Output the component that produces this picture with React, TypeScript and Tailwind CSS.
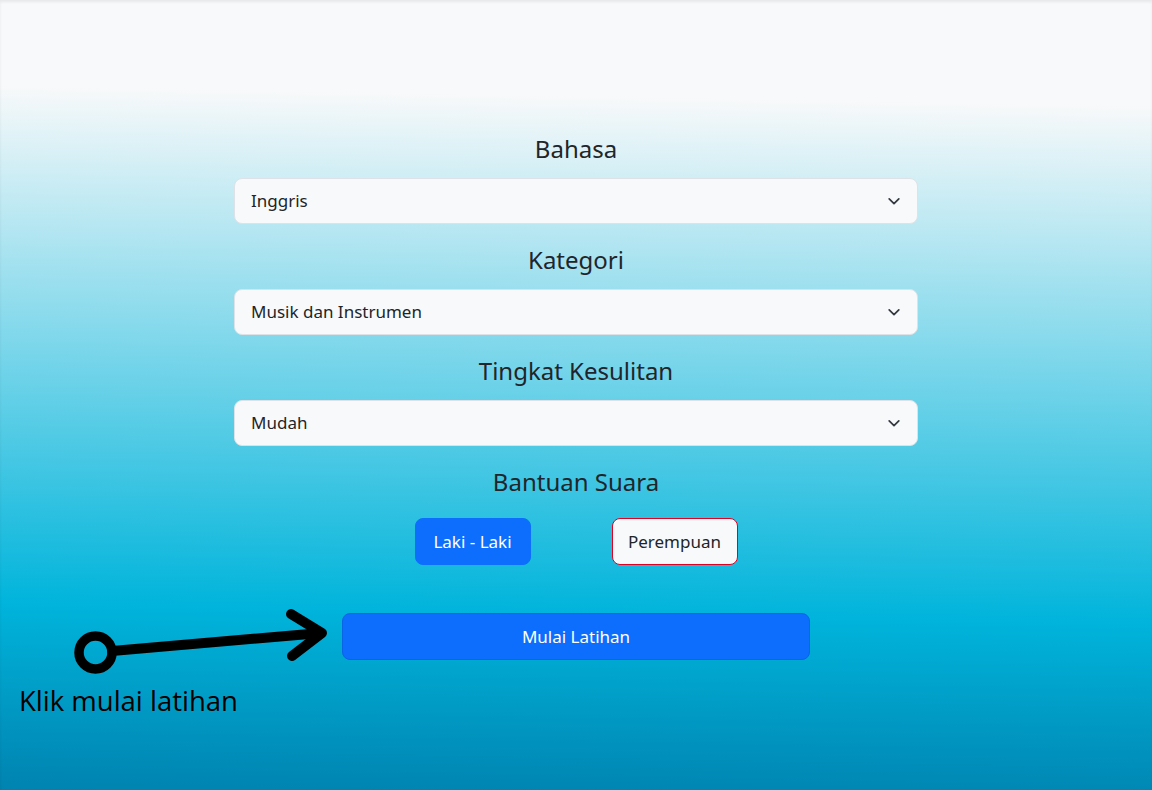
import React from "react";

function Chevron() {
  return (
    <svg width="14" height="14" viewBox="0 0 16 16" fill="none" className="shrink-0">
      <path d="M2.5 5.5 8 11l5.5-5.5" stroke="#343a40" strokeWidth="2" strokeLinecap="round" strokeLinejoin="round" />
    </svg>
  );
}

function Field({ label, value, first }: { label: string; value: string; first?: boolean }) {
  return (
    <div className={first ? "" : "mt-[21px]"}>
      <div className="text-center text-[24px] leading-[29px] text-[#212529]">{label}</div>
      <div className="mt-[15px] flex h-[46px] items-center justify-between rounded-lg border border-[#dee2e6] bg-[#f8f9fa] pl-[16px] pr-[16px] text-[17px] text-[#212529]">
        <span>{value}</span>
        <Chevron />
      </div>
    </div>
  );
}

export default function App() {
  return (
    <div
      className="relative min-h-[790px] w-full overflow-hidden bg-[linear-gradient(181deg,#f8f9fa_13%,#00b4db_77%,#0083b0_100%)] shadow-[inset_0_2px_3px_rgba(0,0,0,0.07)]"
      style={{ fontFamily: '"Noto Sans", sans-serif' }}
    >
      <div className="mx-auto w-[684px] pt-[134px]">
        <Field first label="Bahasa" value="Inggris" />
        <Field label="Kategori" value="Musik dan Instrumen" />
        <Field label="Tingkat Kesulitan" value="Mudah" />
        <div className="mt-[21px] text-center text-[24px] leading-[29px] text-[#212529]">Bantuan Suara</div>
        <div className="mt-[22px] flex justify-center gap-[81px]">
          <button className="h-[47px] w-[116px] rounded-lg border border-[#0d6efd] bg-[#0d6efd] text-[17px] text-white">
            Laki - Laki
          </button>
          <button className="h-[47px] w-[126px] rounded-lg border border-[#e0001f] bg-[#f8f9fa] text-[17px] text-[#212529]">
            Perempuan
          </button>
        </div>
        <div className="mt-[48px] flex justify-center">
          <button className="h-[47px] w-[468px] rounded-lg border border-[#0b63e6] bg-[#0d6efd] text-[17px] text-white">
            Mulai Latihan
          </button>
        </div>
      </div>

      <svg className="absolute left-0 top-0" width="340" height="700" viewBox="0 0 340 700" fill="none">
        <circle cx="95.5" cy="652.5" r="16.5" stroke="#000" strokeWidth="9.5" />
        <path d="M112 651 L321 633" stroke="#000" strokeWidth="10" strokeLinecap="round" />
        <path d="M291 614 L322 633 L292 656" stroke="#000" strokeWidth="10" strokeLinecap="round" strokeLinejoin="round" />
      </svg>
      <div
        className="absolute left-[19px] top-[682px] text-[27.5px] leading-[38px] text-black"
        style={{ fontFamily: '"Open Sans", sans-serif' }}
      >
        Klik mulai latihan
      </div>
    </div>
  );
}
